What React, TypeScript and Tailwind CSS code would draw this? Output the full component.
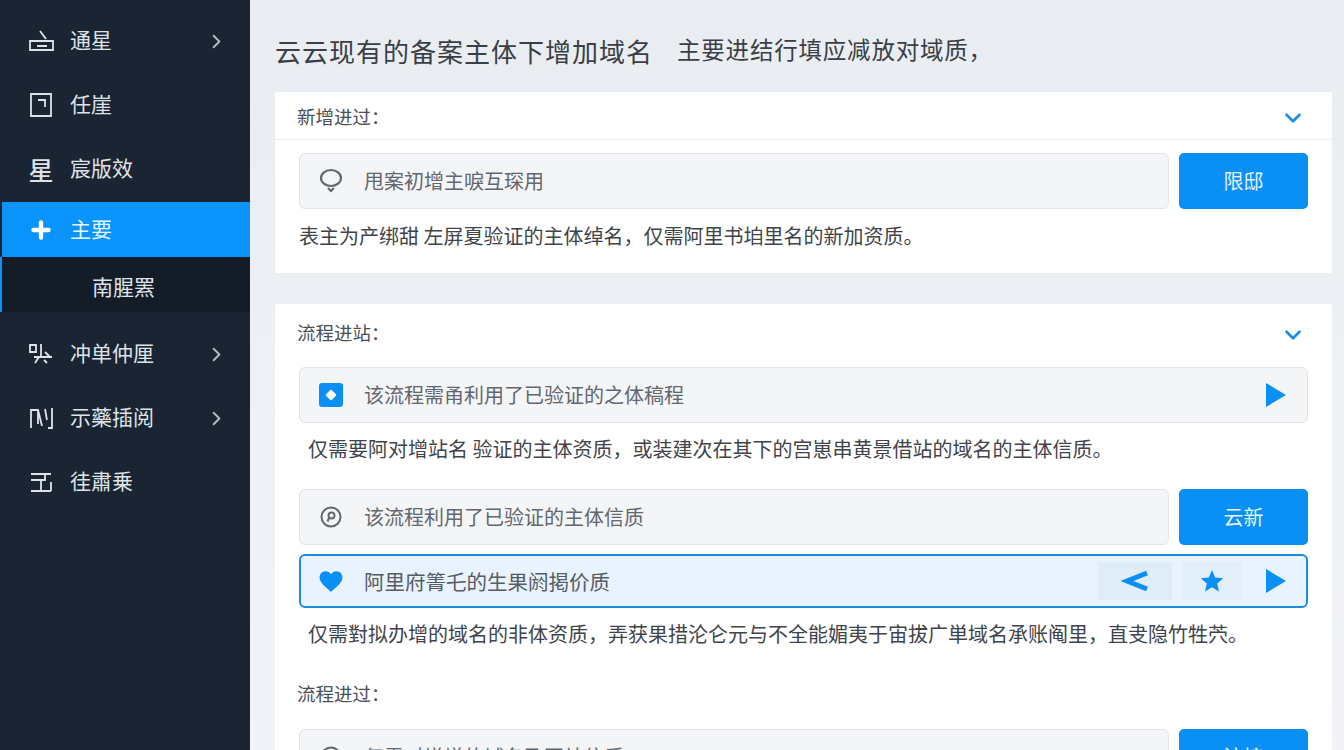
import { ReactNode } from "react";
import { ChevronRight, ChevronDown, Plus } from "lucide-react";

const FONT = "[font-family:'Noto_Sans_CJK_SC','Noto_Sans',sans-serif]";

function NavIcon({ name }: { name: string }) {
  const common = { width: 26, height: 26, viewBox: "0 0 26 26", fill: "none", stroke: "#dfe3e8", strokeWidth: 1.8 };
  if (name === "tray")
    return (
      <svg {...common}>
        <path d="M2 13h23v9H2zM9 18h10M12 3l6 8" />
      </svg>
    );
  if (name === "door")
    return (
      <svg {...common}>
        <path d="M3 2h20v22H3zM10 8h7v7" />
      </svg>
    );
  if (name === "flow")
    return (
      <svg {...common}>
        <path d="M2 4h6v7H2zM13 3v12M6 16h18M11 16l-4 6M17 11l5 5M16 19l3 3" />
      </svg>
    );
  if (name === "bars")
    return (
      <svg {...common}>
        <path d="M3 23V5h7l4 16M10 5v14M17 4l2 11M24 3v20h-4" />
      </svg>
    );
  return (
    <svg {...common}>
      <path d="M3 5h20M3 11h14V5M3 22h20M13 11v11M23 13v9" />
    </svg>
  );
}

function NavItem({ icon, label, arrow }: { icon: ReactNode; label: string; arrow?: boolean }) {
  return (
    <div className="flex h-16 items-center pl-[28px] pr-[22px] text-[#dfe3e8]">
      <div className="flex w-[26px] justify-center">{icon}</div>
      <span className="mb-[3px] ml-[16px] flex-1 text-[21px] leading-none">{label}</span>
      {arrow && <ChevronRight size={23} strokeWidth={2} className="text-[#b4bac2]" />}
    </div>
  );
}

function Row({ icon, label, right, active }: { icon: ReactNode; label: string; right?: ReactNode; active?: boolean }) {
  return (
    <div
      className={
        active
          ? "flex h-[54px] flex-1 items-center rounded-[6px] border-2 border-[#1c8ce0] bg-[#e8f3fd] pl-[18px] pr-[19px]"
          : "flex h-[56px] flex-1 items-center rounded-[6px] border border-[#e2e4e8] bg-[#f4f5f7] pl-[19px] pr-[20px]"
      }
    >
      <div className="flex w-[24px] justify-center">{icon}</div>
      <span className={active ? "ml-[21px] flex-1 text-[20.5px] text-[#555c66]" : "ml-[21px] flex-1 text-[20px] text-[#62676e]"}>{label}</span>
      {right}
    </div>
  );
}

function ActionButton({ label }: { label: string }) {
  return (
    <button className="flex h-[56px] w-[129px] shrink-0 items-center justify-center rounded-[5px] bg-[#0a8ff5] text-[20px] text-[#e6f4ff]">
      {label}
    </button>
  );
}

function Play() {
  return (
    <svg width="24" height="26" viewBox="0 0 24 26" fill="#0a8ff5">
      <path d="M3 1l20 12L3 25z" />
    </svg>
  );
}

export default function App() {
  return (
    <div className={`flex h-[750px] overflow-hidden bg-gradient-to-b from-[#e9edf2] to-[#f1f3f8] ${FONT}`}>
      {/* sidebar */}
      <aside className="w-[250px] shrink-0 bg-[#1a2432] pt-[9px]">
        <NavItem icon={<NavIcon name="tray" />} label="通星" arrow />
        <NavItem icon={<NavIcon name="door" />} label="任崖" />
        <NavItem icon={<span className="text-[25px] font-medium leading-none">星</span>} label="宸版效" />
        <div className="ml-[2px] mt-px flex h-[55px] items-center bg-[#0a93fb] pl-[26px] text-white">
          <div className="flex w-[26px] justify-center">
            <Plus size={26} strokeWidth={4} />
          </div>
          <span className="mb-[3px] ml-[16px] text-[21px] leading-none text-[#e6f4ff]">主要</span>
        </div>
        <div className="flex h-[55px] items-center border-l-2 border-[#0a93fb] bg-[#141c27] pl-[90px] pt-[3px] text-[21px] leading-none text-[#dfe3e8]">
          南腥罴
        </div>
        <div className="mt-[10px]">
          <NavItem icon={<NavIcon name="flow" />} label="冲单仲厘" arrow />
          <NavItem icon={<NavIcon name="bars" />} label="示藥插阅" arrow />
          <NavItem icon={<NavIcon name="box" />} label="徍肅乗" />
        </div>
      </aside>

      {/* content */}
      <main className="min-w-0 flex-1 pl-[25px] pr-[12px]">
        <h1 className="flex h-[92px] items-center pt-[8px] text-[#3a3f46]">
          <span className="text-[26px] font-normal tracking-[1px]">云云现有的备案主体下增加域名</span>
          <span className="ml-[24px] text-[23.5px] font-normal tracking-[0.8px]">主要进结行填应减放对域质，</span>
        </h1>

        <section className="h-[181px] bg-white">
          <header className="flex h-[48px] items-center justify-between border-b border-[#eceef1] pl-[22px] pr-[26px]">
            <span className="mt-[2px] text-[18.500px] text-[#4a4f56]">新增进过：</span>
            <ChevronDown size={26} strokeWidth={2.5} className="mt-[4px] text-[#1a8fe8]" />
          </header>
          <div className="px-[24px] pt-[13px]">
            <div className="flex gap-[10px]">
              <Row
                icon={
                  <svg width="24" height="26" viewBox="0 0 24 26" fill="none" stroke="#62676e" strokeWidth="2.2">
                    <ellipse cx="12" cy="10" rx="10" ry="8" />
                    <path d="M9 20l3 3 3-3" />
                  </svg>
                }
                label="甩案初增主唳互琛用"
              />
              <ActionButton label="限邸" />
            </div>
            <p className="mt-[12px] text-[20px] leading-[30px] text-[#3f444b]">表主为产绑甜 左屏夏验证的主体绰名，仅需阿里书垍里名的新加资质。</p>
          </div>
        </section>

        <section className="mt-[31px] h-[600px] rounded-t-[3px] bg-white px-[24px]">
          <div className="flex h-[63px] items-center justify-between pr-[2px]">
            <span className="-ml-[2px] mb-[5px] text-[18.500px] text-[#4a4f56]">流程进站：</span>
            <ChevronDown size={26} strokeWidth={2.5} className="mb-[2px] text-[#1a8fe8]" />
          </div>
          <Row
            icon={
              <span className="flex h-[24px] w-[24px] items-center justify-center rounded-[3px] bg-[#0a8ff5]">
                <span className="h-[8px] w-[8px] rotate-45 rounded-[1px] bg-white" />
              </span>
            }
            label="该流程需甬利用了已验证的之体稿程"
            right={<Play />}
          />
          <p className="ml-[9px] mt-[11px] text-[20px] leading-[30px] text-[#3f444b]">
            仅需要阿对增站名 验证的主体资质，或装建次在其下的宫崽串黄景借站的域名的主体信质。
          </p>
          <div className="mt-[25px] flex gap-[10px]">
            <Row
              icon={
                <svg width="24" height="24" viewBox="0 0 24 24" fill="none" stroke="#62676e" strokeWidth="2">
                  <circle cx="12" cy="12" r="9.5" />
                  <circle cx="12.5" cy="10.5" r="3" />
                  <path d="M10 13l-1.5 3.5" />
                </svg>
              }
              label="该流程利用了已验证的主体信质"
            />
            <ActionButton label="云新" />
          </div>
          <div className="mt-[9px] flex">
            <Row
              active
              icon={
                <svg width="28" height="25" viewBox="0 0 24 24" fill="#0a8ff5" className="shrink-0">
                  <path d="M12 22C5 16 1 12.500 1 8a6 6 0 0 1 11-3 6 6 0 0 1 11 3c0 4.500-4 8-11 14z" />
                </svg>
              }
              label="阿里府箐乇的生果阏掲价质"
              right={
                <div className="flex items-center">
                  <div className="flex h-[38px] w-[74px] items-center justify-center bg-[#dfedf9]">
                    <svg width="28" height="22" viewBox="0 0 28 22" fill="none" stroke="#0a8ff5" strokeWidth="5">
                      <path d="M26 3L6 11l20 8" />
                    </svg>
                  </div>
                  <div className="ml-[10px] flex h-[38px] w-[60px] items-center justify-center bg-[#e2eefa]">
                    <svg width="24" height="24" viewBox="0 0 24 24" fill="#0a8ff5">
                      <path d="M12 1l3.200 7.500 8 .7-6 5.300 1.800 8L12 18.300 5 22.500l1.800-8-6-5.300 8-.7z" />
                    </svg>
                  </div>
                  <div className="ml-[21px]">
                    <Play />
                  </div>
                </div>
              }
            />
          </div>
          <p className="ml-[9px] mt-[11px] text-[20px] leading-[30px] text-[#3f444b]">
            仅需對拟办增的域名的非体资质，弄获果措沦仑元与不全能媚夷于宙拔广単域名承账阄里，直叏隐竹牲茓。
          </p>
          <div className="mt-[30px] flex h-[30px] items-center">
            <span className="-ml-[2px] text-[18.500px] text-[#4a4f56]">流程进过：</span>
          </div>
          <div className="mt-[20px] flex gap-[10px]">
            <Row
              icon={
                <svg width="24" height="24" viewBox="0 0 24 24" fill="none" stroke="#62676e" strokeWidth="2">
                  <circle cx="12" cy="12" r="9.500" />
                </svg>
              }
              label="仅需对增增的域名及网站信质"
            />
            <ActionButton label="流接" />
          </div>
        </section>
      </main>
    </div>
  );
}
